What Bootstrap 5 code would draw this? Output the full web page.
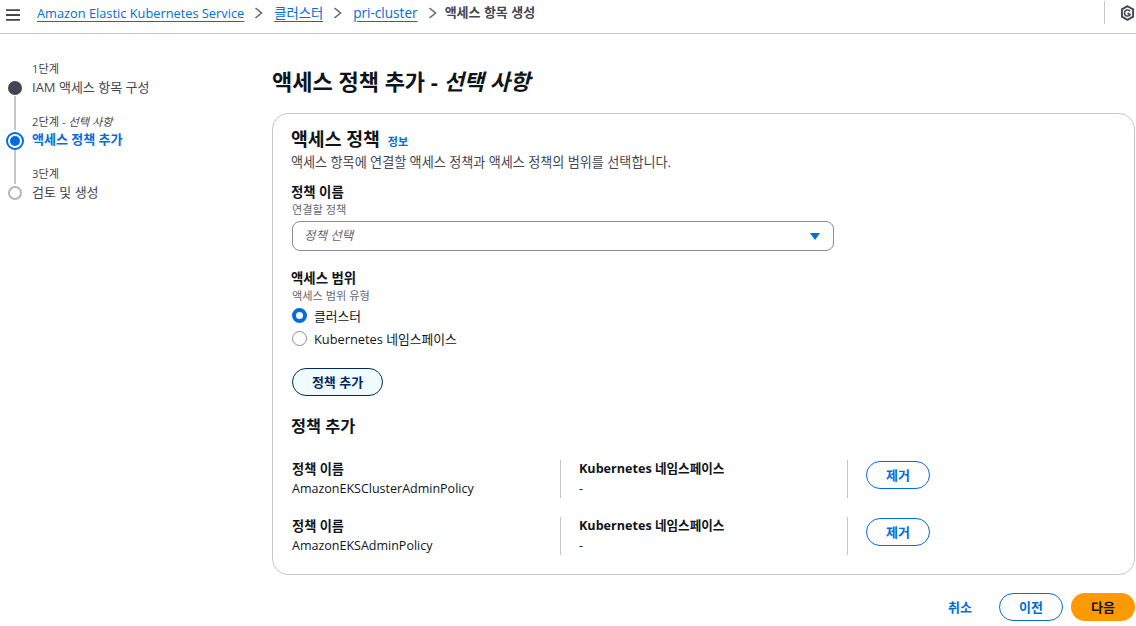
<!DOCTYPE html>
<html lang="ko">
<head>
<meta charset="utf-8">
<title>액세스 항목 생성</title>
<link href="https://cdn.jsdelivr.net/npm/bootstrap@5.3.0/dist/css/bootstrap.min.css" rel="stylesheet">
<style>
html,body{height:100%;overflow:hidden}
body{font-family:"Open Sans","Noto Sans CJK KR",sans-serif;font-size:14px;line-height:20px;color:#0f141a;background:#fff}
.topbar{height:34px;border-bottom:1px solid #c6c6cd;padding:0 1px 0 6px}
.menu-ico{width:14px;height:12px;margin-right:17px;margin-top:-4px}
.crumb{display:flex;align-items:center;height:26px;margin-top:-8px;font-size:12.8px}
.crumb a{color:#006ce0;text-decoration:underline;text-underline-offset:3px}
.crumb a.crumb-k{font-size:13.3px}
.crumb a.crumb-p{font-size:13.6px}
.crumb .sep{width:9px;height:12px;margin:0 11px 0 10px}
.crumb .cur{color:#424650;font-weight:700;font-size:13px;margin:-2px 0 0 -3px}
.vdiv{width:1px;height:23px;background:#c6c6cd;margin:-8px 15px 0 0}
.acct{margin-top:-7px}
.shell{display:flex}
.side{width:272px;flex:none;padding-top:27px;padding-left:8px}
.stp{display:grid;grid-template-columns:14px 1fr;column-gap:10px;position:relative}
.stp+.stp{margin-top:1px}
.stp+.stp+.stp{margin-top:0}
.stp-lab{font-size:11.2px;line-height:16px;color:#424650;height:16px}
.stp-name{height:36px;line-height:20px;color:#424650;font-size:13px}
.stp-name.on{color:#006ce0;font-weight:700;font-size:13px;line-height:18px}
.dotcell{grid-row:1 / 3;position:relative}
.dot{position:absolute;left:0;top:20px;width:14px;height:14px;border-radius:50%;background:#424650}
.dot.on{left:-2px;top:18px;width:18px;height:18px;background:#fff;border:2px solid #006ce0}
.dot.on::after{content:"";position:absolute;left:2px;top:2px;width:10px;height:10px;border-radius:50%;background:#006ce0}
.dot.off{background:#fff;border:2px solid #b4b4bb}
.ln{position:absolute;left:6px;width:2px;background:#c6c6cd}
.mainarea{flex:1;min-width:0;padding-top:33px}
.ttl{font-size:22px;line-height:28px;font-weight:700;margin:0 0 18px}
.panel{width:863px;height:462px;border:1px solid #c6c6cd;border-radius:16px;padding:12px 19px}
.h-panel{font-size:18.3px;line-height:26px;font-weight:700;margin:0 0 0 -1px}
.info{font-size:11px;color:#006ce0;font-weight:700;margin-left:8px}
.desc{font-size:13.1px;line-height:19px;color:#424650;margin:1px 0 0 -1px}
.fl{font-size:13.4px;line-height:18px;font-weight:700;color:#0f141a;margin-left:-1px}
.fs{font-size:11.2px;line-height:14px;color:#656871;margin-top:2px}
.sel{width:542px;height:30px;border:1px solid #8c8c94;border-radius:8px;padding:0 11px;color:#656871;font-style:italic;font-size:12.5px;margin-top:4px}
.caret{width:0;height:0;border-left:5.5px solid transparent;border-right:5.5px solid transparent;border-top:7px solid #006ce0;margin-right:2px}
.rd{width:15px;height:15px;border-radius:50%;border:1px solid #8c8c94;flex:none;background:#fff}
.rd.on{border:4px solid #006ce0}
.rrow{height:23px;color:#0f141a;font-size:12.8px;column-gap:7px}
.pill{border-radius:20px;font-weight:700;font-size:13px;line-height:18px;padding:0;text-align:center}
.pill-add{width:91px;height:28px;border:1.5px solid #002a66;background:#f0fbff;color:#002a66;margin-top:18px}
.pill-blue{width:64px;height:28px;border:1.5px solid #006ce0;background:#fff;color:#006ce0}
.h-sec{font-size:16.3px;line-height:22px;font-weight:700;margin:19px 0 23px -1px}
.pol{display:flex;height:38px;margin-bottom:19px}
.pol .c1{width:269px;border-right:1px solid #c6c6cd}
.pol .c2{width:287px;padding-left:18px;border-right:1px solid #c6c6cd}
.pol .c3{padding:1px 0 0 18px}
.pol .k{font-size:13.2px;line-height:18.5px;font-weight:700}
.pol .c2 .k{font-size:12.6px}
.pol .v{font-size:12.5px;line-height:20px}
.foot{width:863px;margin-top:18px;height:28px}
.linkbtn{color:#006ce0;font-weight:700;font-size:13px;margin-right:27px}
.pill-next{width:64px;height:28px;border:0;background:#ff9900;color:#0f141a;margin-left:8px}
</style>
</head>
<body>
<header class="topbar d-flex align-items-center">
  <svg class="menu-ico flex-none" viewBox="0 0 14 12" aria-hidden="true"><path d="M0 1.2h14M0 6h14M0 10.8h14" stroke="#424650" stroke-width="1.8" fill="none"/></svg>
  <nav class="crumb flex-grow-1">
    <a href="#">Amazon Elastic Kubernetes Service</a>
    <svg class="sep" viewBox="0 0 9 12"><path d="M1.5 1l6 5-6 5" stroke="#656871" stroke-width="1.6" fill="none"/></svg>
    <a class="crumb-k" href="#">클러스터</a>
    <svg class="sep" viewBox="0 0 9 12"><path d="M1.5 1l6 5-6 5" stroke="#656871" stroke-width="1.6" fill="none"/></svg>
    <a class="crumb-p" href="#">pri-cluster</a>
    <svg class="sep" viewBox="0 0 9 12"><path d="M1.5 1l6 5-6 5" stroke="#656871" stroke-width="1.6" fill="none"/></svg>
    <span class="cur">액세스 항목 생성</span>
  </nav>
  <div class="vdiv"></div>
  <svg class="acct" width="15" height="16" viewBox="0 0 15 16" aria-hidden="true"><path d="M7.5 1.2l5.6 3.2v7.2l-5.6 3.2-5.6-3.2V4.4z" fill="none" stroke="#424650" stroke-width="1.9"/><path d="M10 9.6A3 3 0 1 1 10 6.4" fill="none" stroke="#424650" stroke-width="1.6"/><path d="M7.5 8l3 2" stroke="#424650" stroke-width="1.8"/></svg>
</header>
<div class="shell">
  <aside class="side">
    <div class="stp">
      <div class="dotcell"><span class="dot"></span><span class="ln" style="top:35px;height:34px"></span></div>
      <div class="stp-lab">1단계</div>
      <div class="stp-name">IAM 액세스 항목 구성</div>
    </div>
    <div class="stp">
      <div class="dotcell"><span class="dot on"></span><span class="ln" style="top:36px;height:34px"></span></div>
      <div class="stp-lab">2단계 - <i>선택 사항</i></div>
      <div class="stp-name on">액세스 정책 추가</div>
    </div>
    <div class="stp">
      <div class="dotcell"><span class="dot off"></span></div>
      <div class="stp-lab">3단계</div>
      <div class="stp-name">검토 및 생성</div>
    </div>
  </aside>
  <main class="mainarea">
    <h1 class="ttl">액세스 정책 추가 - <i>선택 사항</i></h1>
    <section class="panel">
      <div class="d-flex align-items-baseline"><h2 class="h-panel">액세스 정책</h2><a class="info text-decoration-none" href="#">정보</a></div>
      <div class="desc">액세스 항목에 연결할 액세스 정책과 액세스 정책의 범위를 선택합니다.</div>
      <div class="fl" style="margin-top:11px">정책 이름</div>
      <div class="fs">연결할 정책</div>
      <div class="sel d-flex align-items-center justify-content-between"><span>정책 선택</span><span class="caret"></span></div>
      <div class="fl" style="margin-top:18px">액세스 범위</div>
      <div class="fs">액세스 범위 유형</div>
      <div class="rrow d-flex align-items-center" style="margin-top:1px"><span class="rd on"></span><span>클러스터</span></div>
      <div class="rrow d-flex align-items-center"><span class="rd"></span><span>Kubernetes 네임스페이스</span></div>
      <button type="button" class="btn pill pill-add d-block">정책 추가</button>
      <h3 class="h-sec">정책 추가</h3>
      <div class="pol">
        <div class="c1"><div class="k">정책 이름</div><div class="v">AmazonEKSClusterAdminPolicy</div></div>
        <div class="c2"><div class="k">Kubernetes 네임스페이스</div><div class="v">-</div></div>
        <div class="c3"><button type="button" class="btn pill pill-blue">제거</button></div>
      </div>
      <div class="pol">
        <div class="c1"><div class="k">정책 이름</div><div class="v">AmazonEKSAdminPolicy</div></div>
        <div class="c2"><div class="k">Kubernetes 네임스페이스</div><div class="v">-</div></div>
        <div class="c3"><button type="button" class="btn pill pill-blue">제거</button></div>
      </div>
    </section>
    <div class="foot d-flex justify-content-end align-items-center">
      <a class="linkbtn text-decoration-none" href="#">취소</a>
      <button type="button" class="btn pill pill-blue">이전</button>
      <button type="button" class="btn pill pill-next">다음</button>
    </div>
  </main>
</div>
<script src="https://cdn.jsdelivr.net/npm/bootstrap@5.3.0/dist/js/bootstrap.bundle.min.js"></script>
</body>
</html>
